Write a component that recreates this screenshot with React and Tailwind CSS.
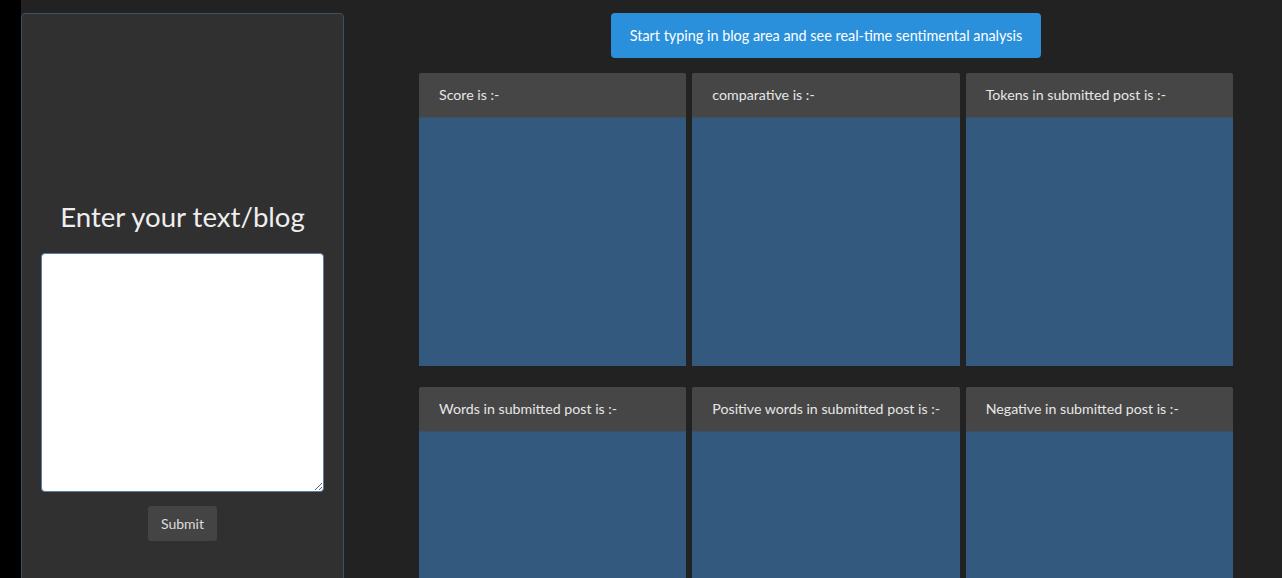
const cards = [
  'Score is :-',
  'comparative is :-',
  'Tokens in submitted post is :-',
  'Words in submitted post is :-',
  'Positive words in submitted post is :-',
  'Negative in submitted post is :-',
];

function Card({ title }) {
  return (
    <div className="flex h-[293px] flex-col overflow-hidden rounded-t-[3px] bg-[#34597f]">
      <div className="flex h-[45px] shrink-0 items-center whitespace-nowrap border-b border-[#3c4f63] bg-[#464646] pl-5 text-[14.2px] text-[#e6e6e6]">
        {title}
      </div>
      <div className="flex-1" />
    </div>
  );
}

export default function App() {
  return (
    <div className="flex h-[578px] w-[1282px] overflow-hidden bg-[#222222] font-['Lato',sans-serif]">
      <div className="h-full w-[21px] shrink-0 bg-black" />
      <div className="flex flex-1 items-start pt-[13px]">
        <div className="flex h-[600px] w-[323px] shrink-0 flex-col items-center rounded-t-[4px] border border-[#3e5064] bg-[#303030] pt-[185px]">
          <h2 className="text-[27.6px] leading-[36px] text-[#eeeeee]">Enter your text/blog</h2>
          <textarea className="mt-[18px] h-[239px] w-[283px] shrink-0 rounded-[4px] border border-[#5a7fa6] bg-white px-2 py-1 text-[14px] text-black outline-none" />
          <button className="mt-[14px] h-[35px] shrink-0 rounded-[3px] bg-[#444444] px-[13px] text-[14px] text-[#dddddd]">
            Submit
          </button>
        </div>
        <div className="ml-[75px] flex w-[814px] shrink-0 flex-col items-center">
          <div className="flex h-[45px] shrink-0 items-center rounded-[4px] bg-[#2a90dc] px-[19px] text-[14.4px] text-white">
            Start typing in blog area and see real-time sentimental analysis
          </div>
          <div className="mt-[15px] grid w-full grid-cols-3 gap-x-[6px] gap-y-[21px]">
            {cards.map((c) => (
              <Card key={c} title={c} />
            ))}
          </div>
        </div>
      </div>
    </div>
  );
}
